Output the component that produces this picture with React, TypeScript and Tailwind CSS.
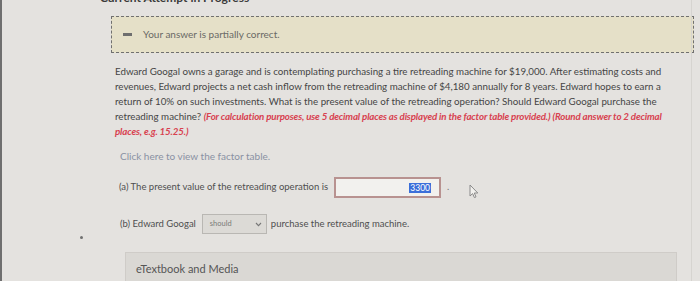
import React from "react";

const font = { fontFamily: "Lato, 'Open Sans', sans-serif" };

function Cursor() {
  return (
    <svg width="10" height="15" viewBox="0 0 10 15" className="absolute left-[469px] top-[184px]">
      <path d="M1 1 L1 12 L3.6 9.6 L5.4 13.6 L7 12.9 L5.3 9 L8.8 9 Z" fill="#f2f1ee" stroke="#8a8a8a" strokeWidth="1" strokeLinejoin="round" />
    </svg>
  );
}

export default function App() {
  return (
    <div
      className="relative w-[700px] h-[281px] overflow-hidden bg-[#e4e2df] flex text-[#4a4a4a]"
      style={font}
    >
      <div className="w-[2px] h-full bg-[#6f6f6f] shrink-0" />
      <div className="flex-1 flex flex-col relative">
        {/* header partially visible */}
        <div className="ml-[98px] -mt-[9px] h-[14px] text-[12px] font-bold text-[#3a3a3a] leading-[14px] whitespace-nowrap">
          Current Attempt in Progress
        </div>

        {/* dashed feedback box */}
        <div className="ml-[109px] mt-[11px] w-[583px] h-[37px] border border-dashed border-[#707070] bg-[#e5e0c8] flex items-center">
          <div className="ml-[11px] w-[9px] h-[3px] bg-[#6e6e6e]" />
          <div className="ml-[11px] text-[10px] text-[#6a6a66] whitespace-nowrap">Your answer is partially correct.</div>
        </div>

        {/* question paragraph */}
        <div className="ml-[113px] mt-[11px] text-[9.75px] leading-[15px] text-[#454545] whitespace-nowrap">
          <div>Edward Googal owns a garage and is contemplating purchasing a tire retreading machine for $19,000. After estimating costs and</div>
          <div>revenues, Edward projects a net cash inflow from the retreading machine of $4,180 annually for 8 years. Edward hopes to earn a</div>
          <div>return of 10% on such investments. What is the present value of the retreading operation? Should Edward Googal purchase the</div>
          <div>
            retreading machine?{" "}
            <span className="text-[#d8414f] font-bold italic tracking-[-0.15px]">
              (For calculation purposes, use 5 decimal places as displayed in the factor table provided.) (Round answer to 2 decimal
            </span>
          </div>
          <div className="text-[#d8414f] font-bold italic tracking-[-0.15px]">places, e.g. 15.25.)</div>
        </div>

        <div className="ml-[118px] mt-[10px] text-[10px] leading-[15px] text-[#8a91a3] whitespace-nowrap">
          Click here to view the factor table.
        </div>

        {/* (a) */}
        <div className="ml-[117px] mt-[13px] flex items-center h-[21px] text-[9.5px] text-[#4f4f4f] whitespace-nowrap">
          <span>(a) The present value of the retreading operation is</span>
          <div className="ml-[6px] w-[107px] h-[21px] border-2 border-[#b89290] bg-[#f2f1ee] flex items-center justify-end pr-[8px]">
            <span className="bg-[#3c6fd9] text-white text-[8.5px] leading-[10px] px-[1px]">3300</span>
          </div>
          <span className="ml-[6px] text-[#777]">.</span>
        </div>

        {/* (b) */}
        <div className="ml-[118px] mt-[16px] flex items-center h-[20px] text-[9.5px] text-[#4f4f4f] whitespace-nowrap">
          <span>(b) Edward Googal</span>
          <div className="ml-[6px] w-[65px] h-[20px] border border-[#b9b7b3] bg-[#dcdad6] flex items-center justify-between pl-[7px] pr-[4px]">
            <span className="text-[7.5px] text-[#7a7a78]">should</span>
            <svg width="7" height="5" viewBox="0 0 7 5">
              <path d="M1 1 L3.5 3.6 L6 1" fill="none" stroke="#777" strokeWidth="1.1" />
            </svg>
          </div>
          <span className="ml-[4px]">purchase the retreading machine.</span>
        </div>

        {/* eTextbook */}
        <div className="ml-[123px] mt-[18px] w-[552px] flex-1 bg-[#dad8d4] border-t border-l border-r border-[#cfccc8] pt-[8px] pl-[10px] text-[11px] text-[#555] whitespace-nowrap">
          eTextbook and Media
        </div>

        <div className="absolute right-[8px] top-0 bottom-0 w-px bg-[#d6d4d0]" />
        <div className="absolute left-[78px] top-[236px] w-[3px] h-[3px] rounded-full bg-[#707070]" />
      </div>
      <Cursor />
    </div>
  );
}
